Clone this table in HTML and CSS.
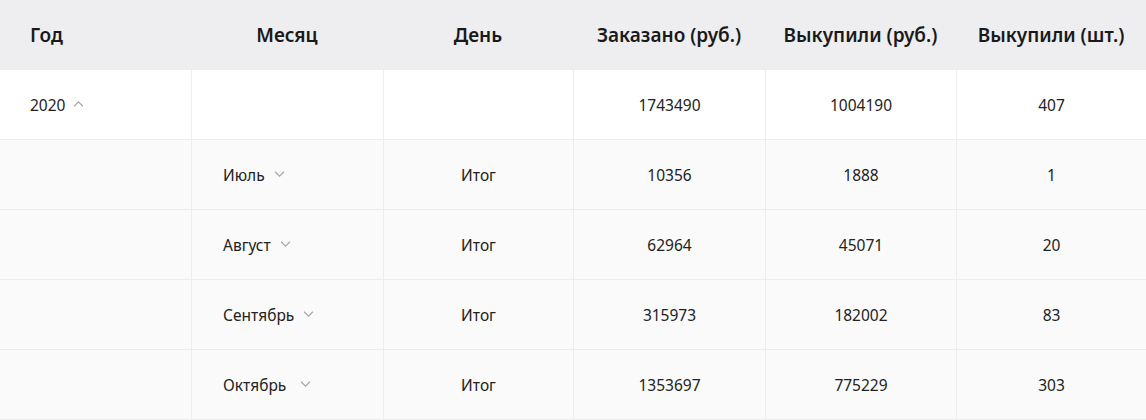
FILE: index.html
```html
<!DOCTYPE html>
<html lang="ru">
<head>
<meta charset="utf-8">
<link rel="stylesheet" href="styles.css">
</head>
<body>
<div class="table">
  <div class="row head">
    <div class="cell left">Год</div>
    <div class="cell">Месяц</div>
    <div class="cell">День</div>
    <div class="cell">Заказано (руб.)</div>
    <div class="cell">Выкупили (руб.)</div>
    <div class="cell">Выкупили (шт.)</div>
  </div>
  <div class="row top">
    <div class="cell left">2020<svg class="chev up" viewBox="0 0 10 6"><path d="M1 5.5 L5 1.5 L9 5.5"/></svg></div>
    <div class="cell"></div>
    <div class="cell"></div>
    <div class="cell">1743490</div>
    <div class="cell">1004190</div>
    <div class="cell">407</div>
  </div>
  <div class="row sub">
    <div class="cell"></div>
    <div class="cell left month">Июль<svg class="chev" viewBox="0 0 10 6"><path d="M1 0.5 L5 4.5 L9 0.5"/></svg></div>
    <div class="cell">Итог</div>
    <div class="cell">10356</div>
    <div class="cell">1888</div>
    <div class="cell">1</div>
  </div>
  <div class="row sub">
    <div class="cell"></div>
    <div class="cell left month">Август<svg class="chev" viewBox="0 0 10 6"><path d="M1 0.5 L5 4.5 L9 0.5"/></svg></div>
    <div class="cell">Итог</div>
    <div class="cell">62964</div>
    <div class="cell">45071</div>
    <div class="cell">20</div>
  </div>
  <div class="row sub">
    <div class="cell"></div>
    <div class="cell left month">Сентябрь<svg class="chev" viewBox="0 0 10 6"><path d="M1 0.5 L5 4.5 L9 0.5"/></svg></div>
    <div class="cell">Итог</div>
    <div class="cell">315973</div>
    <div class="cell">182002</div>
    <div class="cell">83</div>
  </div>
  <div class="row sub">
    <div class="cell"></div>
    <div class="cell left month">Октябрь<svg class="chev wide" viewBox="0 0 10 6"><path d="M1 0.5 L5 4.5 L9 0.5"/></svg></div>
    <div class="cell">Итог</div>
    <div class="cell">1353697</div>
    <div class="cell">775229</div>
    <div class="cell">303</div>
  </div>
</div>
</body>
</html>
```
FILE: styles.css
```css
html, body {
  margin: 0;
  padding: 0;
  background: #ffffff;
}
body {
  font-family: "Noto Sans", "Open Sans", sans-serif;
  color: #222222;
  width: 1146px;
  height: 420px;
  overflow: hidden;
}
.table {
  display: flex;
  flex-direction: column;
}
.row {
  display: grid;
  grid-template-columns: 191px 192px 190px 192px 191px 190px;
  height: 70px;
  box-sizing: border-box;
}
.cell {
  display: flex;
  align-items: center;
  justify-content: center;
  font-size: 15.5px;
  box-sizing: border-box;
}
.cell.left {
  justify-content: flex-start;
  padding-left: 30px;
}
.cell.month {
  padding-left: 31px;
}
.head {
  background: #eeeef0;
}
.head .cell {
  font-size: 19px;
  font-weight: 600;
  color: #1a1a1a;
}
.top {
  background: #ffffff;
  border-bottom: 1px solid #ededed;
}
.sub {
  background: #fafafa;
  border-bottom: 1px solid #ededed;
}
.top .cell + .cell,
.sub .cell + .cell {
  border-left: 1px solid #ededed;
}
.chev {
  width: 11px;
  height: 7px;
  margin-left: 9px;
  fill: none;
  stroke: #a8a8a8;
  stroke-width: 1.1;
}
.chev.up {
  margin-left: 8px;
  margin-bottom: 3px;
}
.chev.wide {
  margin-left: 14px;
}
```
